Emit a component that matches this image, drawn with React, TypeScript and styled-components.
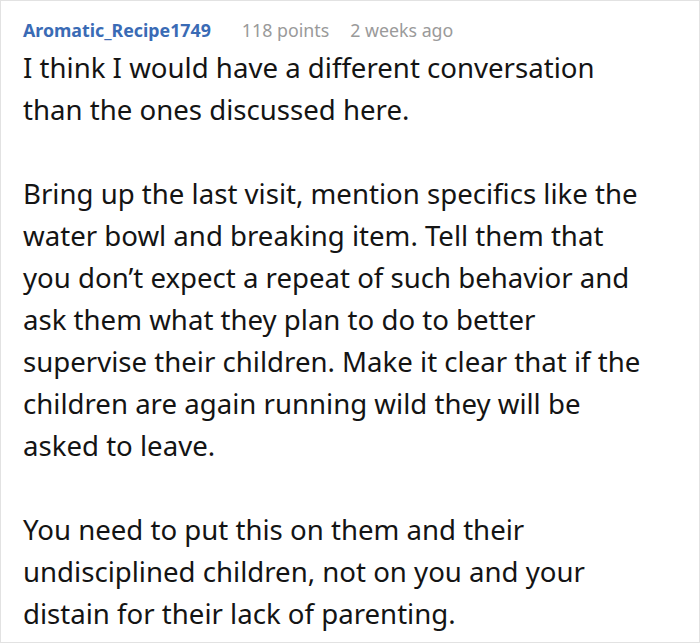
import styled, { createGlobalStyle } from 'styled-components';

const GlobalStyle = createGlobalStyle`
  html, body {
    margin: 0;
    padding: 0;
    background: #ffffff;
  }
`;

const Card = styled.div`
  box-sizing: border-box;
  width: 700px;
  height: 643px;
  border: 1px solid #e2e2e2;
  background: #ffffff;
  padding: 13px 49px 0 22px;
  font-family: 'Noto Sans', 'Open Sans', sans-serif;
  overflow: hidden;
`;

const Meta = styled.div`
  display: flex;
  align-items: baseline;
  gap: 21px;
  font-size: 17.8px;
  line-height: 32px;
`;

const Author = styled.span`
  color: #3a6bb5;
  font-weight: 700;
  margin-right: 10px;
`;

const MetaText = styled.span`
  color: #9a9a9a;
`;

const Body = styled.div`
  color: #141414;
  font-size: 27.6px;
  line-height: 42px;
`;

const Paragraph = styled.p`
  margin: 0 0 42px 0;
`;

const paragraphs = [
  'I think I would have a different conversation than the ones discussed here.',
  'Bring up the last visit, mention specifics like the water bowl and breaking item. Tell them that you don’t expect a repeat of such behavior and ask them what they plan to do to better supervise their children. Make it clear that if the children are again running wild they will be asked to leave.',
  'You need to put this on them and their undisciplined children, not on you and your distain for their lack of parenting.',
];

export default function App() {
  return (
    <>
      <GlobalStyle />
      <Card>
        <Meta>
          <Author>Aromatic_Recipe1749</Author>
          <MetaText>118 points</MetaText>
          <MetaText>2 weeks ago</MetaText>
        </Meta>
        <Body>
          {paragraphs.map((text, i) => (
            <Paragraph key={i}>{text}</Paragraph>
          ))}
        </Body>
      </Card>
    </>
  );
}
